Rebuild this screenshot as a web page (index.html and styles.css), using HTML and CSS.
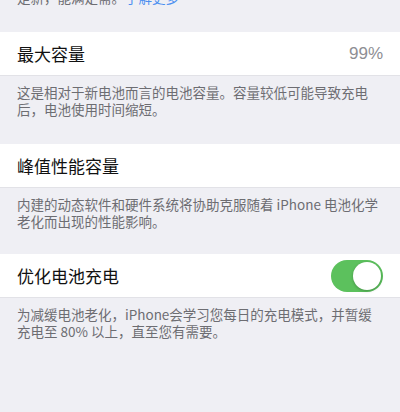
FILE: index.html
```html
<!DOCTYPE html>
<html lang="zh-CN">
<head>
<meta charset="utf-8">
<link rel="stylesheet" href="styles.css">
</head>
<body>
<div class="page">
  <p class="footer top">是新，能满足需。<span class="link">了解更多…</span></p>
  <div class="cell cell-first">
    <span class="title">最大容量</span>
    <span class="value">99%</span>
  </div>
  <p class="footer">这是相对于新电池而言的电池容量。容量较低可能导致充电<br>后，电池使用时间缩短。</p>
  <div class="cell">
    <span class="title">峰值性能容量</span>
  </div>
  <p class="footer">内建的动态软件和硬件系统将协助克服随着 iPhone 电池化学<br>老化而出现的性能影响。</p>
  <div class="cell">
    <span class="title">优化电池充电</span>
    <span class="toggle"><span class="knob"></span></span>
  </div>
  <p class="footer">为减缓电池老化，iPhone会学习您每日的充电模式，并暂缓<br>充电至 80% 以上，直至您有需要。</p>
</div>
</body>
</html>
```
FILE: styles.css
```css
html, body {
  margin: 0;
  padding: 0;
  background: #efeff4;
}
.page {
  width: 400px;
  height: 412px;
  overflow: hidden;
  font-family: "Noto Sans CJK SC", "Noto Sans", sans-serif;
}
.footer {
  margin: 0;
  padding: 8px 16px 25px 17px;
  font-size: 13.5px;
  line-height: 17px;
  color: #6d6d72;
  white-space: nowrap;
}
.footer.top {
  margin-top: -11px;
  padding-top: 0;
  padding-bottom: 26px;
}
.link {
  color: #4a8ef0;
}
.cell {
  height: 43px;
  background: #ffffff;
  border-bottom: 1px solid #e2e2e7;
  display: flex;
  align-items: center;
  justify-content: space-between;
  padding: 0 17px;
}
.cell + .footer {
  padding-bottom: 24px;
}
.cell-first + .footer {
  padding-bottom: 26px;
}
.title {
  font-size: 17px;
  color: #111111;
}
.value {
  font-size: 17px;
  color: #8e8e93;
  font-family: "Liberation Sans", "Noto Sans", sans-serif;
}
.toggle {
  width: 52px;
  height: 32px;
  border-radius: 16px;
  background: #5cc15d;
  display: flex;
  align-items: center;
  justify-content: flex-end;
  padding: 0 2px;
  box-sizing: border-box;
}
.knob {
  width: 28px;
  height: 28px;
  border-radius: 50%;
  background: #ffffff;
  box-shadow: 0 1px 3px rgba(0,0,0,0.25);
}
```
